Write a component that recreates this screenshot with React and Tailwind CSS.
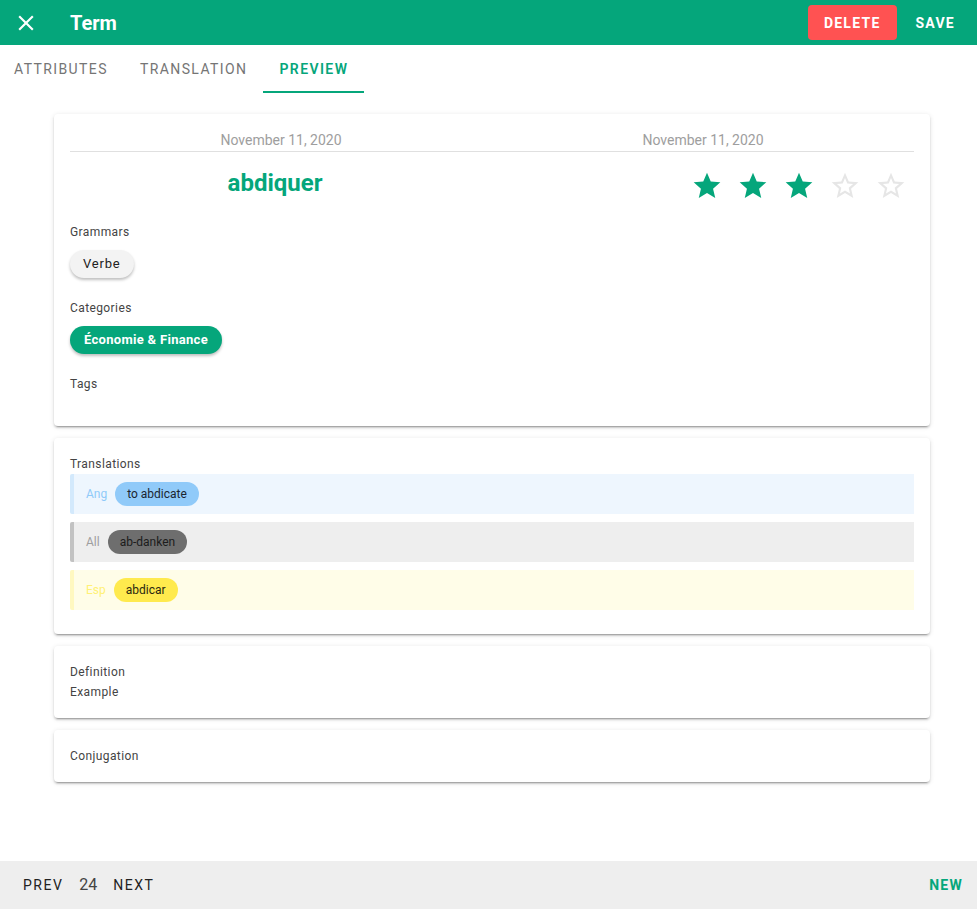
const GREEN = "#05a67b";

const starFull =
    "M12,17.27L18.18,21L16.54,13.97L22,9.24L14.81,8.62L12,2L9.19,8.62L2,9.24L7.45,13.97L5.82,21L12,17.27Z";
const starEmpty =
    "M12,15.39L8.24,17.66L9.23,13.38L5.91,10.5L10.28,10.13L12,6.09L13.71,10.13L18.08,10.5L14.76,13.38L15.75,17.66M22,9.24L14.81,8.62L12,2L9.19,8.62L2,9.24L7.45,13.97L5.82,21L12,17.27L18.18,21L16.54,13.97L22,9.24Z";

const Card = ({ children, className = "" }) => (
    <div
        className={`bg-white rounded p-4 shadow-[0_3px_1px_-2px_rgba(0,0,0,0.2),0_2px_2px_0_rgba(0,0,0,0.14),0_1px_5px_0_rgba(0,0,0,0.12)] ${className}`}
    >
        {children}
    </div>
);

const Label = ({ children, className = "" }) => (
    <div className={`text-xs leading-4 tracking-[0.4px] text-[#444] ${className}`}>
        {children}
    </div>
);

const translations = [
    {
        lang: "Ang",
        word: "to abdicate",
        row: "bg-[#eef6fe] border-[#d3e9fc]",
        lang_color: "text-[#90caf9]",
        chip: "bg-[#90caf9] text-[#1b2530]",
    },
    {
        lang: "All",
        word: "ab-danken",
        row: "bg-[#eeeeee] border-[#c2c2c2]",
        lang_color: "text-[#9e9e9e]",
        chip: "bg-[#6e6e6e] text-[#1c1c1c]",
    },
    {
        lang: "Esp",
        word: "abdicar",
        row: "bg-[#fffde8] border-[#fff8c0]",
        lang_color: "text-[#fff176]",
        chip: "bg-[#ffea4d] text-[#2a2710]",
    },
];

export default function App() {
    const rating = 3;
    return (
        <div className="min-h-screen flex flex-col bg-white font-['Roboto',sans-serif]">
            <header className="h-[45px] flex items-center bg-[#05a67b] text-white">
                <button className="w-12 h-12 ml-[2px] flex items-center justify-center">
                    <svg width="26" height="26" viewBox="0 0 24 24" fill="white">
                        <path d="M19 6.41L17.59 5 12 10.59 6.41 5 5 6.41 10.59 12 5 17.59 6.41 19 12 13.41 17.59 19 19 17.59 13.41 12z" />
                    </svg>
                </button>
                <h1 className="ml-5 text-xl font-bold">Term</h1>
                <div className="ml-auto flex items-center mr-[6px]">
                    <button className="h-[35px] px-4 rounded bg-[#ff5252] text-sm font-bold tracking-[1.25px] mr-[3px]">
                        DELETE
                    </button>
                    <button className="h-[35px] px-4 text-sm font-bold tracking-[1.25px]">
                        SAVE
                    </button>
                </div>
            </header>

            <nav className="h-12 flex -ml-[2px]">
                {["ATTRIBUTES", "TRANSLATION", "PREVIEW"].map((tab) => (
                    <div
                        key={tab}
                        className={`px-4 pt-[2px] flex items-center text-sm tracking-[1.4px] border-b-2 ${
                            tab === "PREVIEW"
                                ? "text-[#05a67b] font-semibold border-[#05a67b]"
                                : "text-[#757575] font-normal border-transparent"
                        }`}
                    >
                        {tab}
                    </div>
                ))}
            </nav>

            <main className="flex-1 ml-[54px] w-[876px] pt-[21px] flex flex-col gap-3">
                <Card>
                    <div className="grid grid-cols-2 text-center text-sm leading-5 text-[#9e9e9e] pb-[1px] border-b border-[#e0e0e0]">
                        <div>November 11, 2020</div>
                        <div>November 11, 2020</div>
                    </div>
                    <div className="grid grid-cols-2 mt-[15px]">
                        <div className="text-center pr-3 text-2xl leading-8 font-bold text-[#05a67b]">
                            abdiquer
                        </div>
                        <div className="flex justify-end mt-[3px]">
                            {[1, 2, 3, 4, 5].map((n) => (
                                <div key={n} className="w-[46px] flex justify-center">
                                    <svg
                                        width="32"
                                        height="32"
                                        viewBox="0 0 24 24"
                                        fill={n <= rating ? GREEN : "#e6e6e6"}
                                    >
                                        <path d={n <= rating ? starFull : starEmpty} />
                                    </svg>
                                </div>
                            ))}
                        </div>
                    </div>

                    <Label className="mt-[22px]">Grammars</Label>
                    <div className="mt-[10px] flex">
                        <span className="h-7 px-[13px] flex items-center rounded-full bg-[#f3f3f3] text-[13px] font-normal tracking-[0.8px] text-[#222] shadow-[0_2px_3px_rgba(0,0,0,0.25)]">
                            Verbe
                        </span>
                    </div>

                    <Label className="mt-[22px]">Categories</Label>
                    <div className="mt-[10px] flex">
                        <span className="h-7 px-[14px] flex items-center rounded-full bg-[#05a67b] text-[13px] font-bold tracking-[0.3px] text-white shadow-[0_2px_3px_rgba(0,0,0,0.25)]">
                            Économie &amp; Finance
                        </span>
                    </div>

                    <Label className="mt-[22px]">Tags</Label>
                    <div className="h-[18px]" />
                </Card>

                <Card className="pb-6">
                    <Label className="mt-[2px]">Translations</Label>
                    <div className="mt-[2px] flex flex-col gap-2">
                        {translations.map((t) => (
                            <div
                                key={t.lang}
                                className={`h-10 flex items-center gap-2 pl-3 border-l-4 rounded-l-[2px] text-xs ${t.row}`}
                            >
                                <span className={t.lang_color}>{t.lang}</span>
                                <span className={`h-6 px-3 flex items-center rounded-full ${t.chip}`}>
                                    {t.word}
                                </span>
                            </div>
                        ))}
                    </div>
                </Card>

                <Card>
                    <Label className="leading-5">Definition</Label>
                    <Label className="leading-5">Example</Label>
                </Card>

                <Card>
                    <Label className="leading-5">Conjugation</Label>
                </Card>
            </main>

            <footer className="h-12 mt-[79px] flex items-center bg-[#eeeeee] pl-[7px] pr-[14px]">
                <button className="px-4 text-sm font-normal tracking-[1.5px] text-[#222]">
                    PREV
                </button>
                <span className="text-base text-[#444]">24</span>
                <button className="px-4 text-sm font-normal tracking-[1.5px] text-[#222]">
                    NEXT
                </button>
                <button className="ml-auto text-sm font-bold tracking-[1.25px] text-[#05a67b]">
                    NEW
                </button>
            </footer>
        </div>
    );
}
